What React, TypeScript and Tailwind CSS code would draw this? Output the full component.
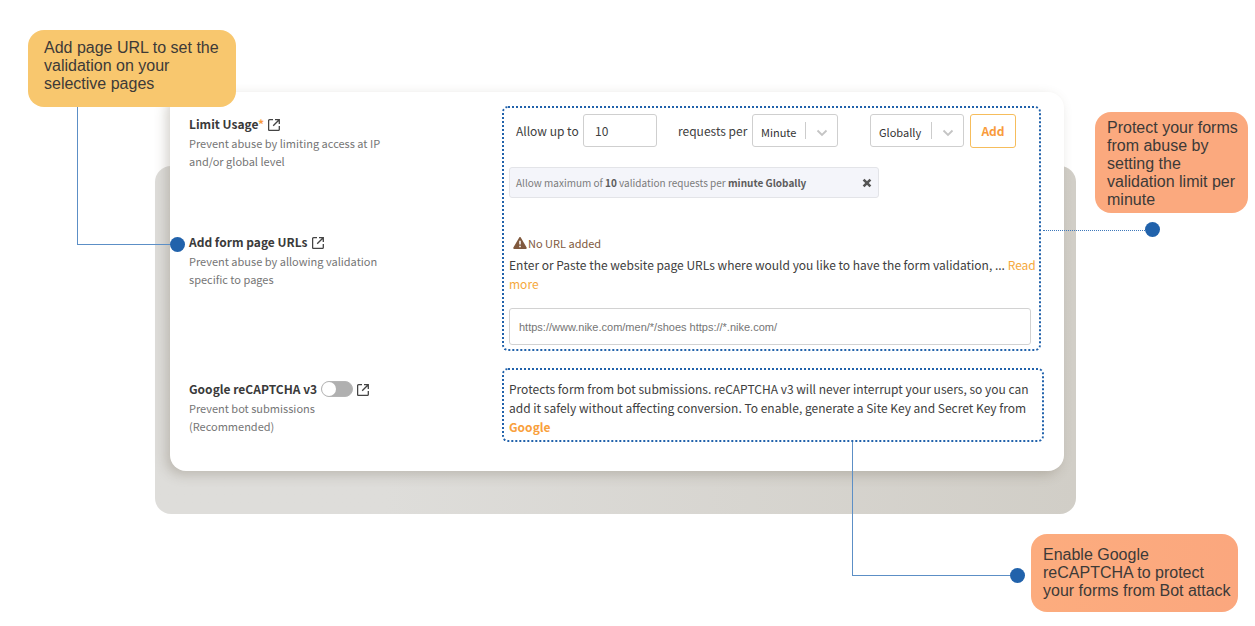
import type { ReactNode } from "react";

function ExternalIcon() {
  return (
    <svg className="mt-0.5 size-3 shrink-0 text-[#444444]" viewBox="0 0 12 12" fill="none" stroke="currentColor" strokeWidth="1.3" aria-hidden="true">
      <path d="M5 .7H1.6A1 1 0 0 0 .6 1.7V10.4A1 1 0 0 0 1.6 11.4H10.3A1 1 0 0 0 11.3 10.4V7" />
      <path d="M7 .7H11.3V5M11.2 .8L5.2 6.8" />
    </svg>
  );
}

function CloseIcon() {
  return (
    <svg className="size-2.5" viewBox="0 0 10 10" fill="none" stroke="currentColor" strokeWidth="2.6" aria-hidden="true">
      <path d="M1.6 1.6L8.4 8.4M8.4 1.6L1.6 8.4" />
    </svg>
  );
}

function WarningIcon() {
  return (
    <svg className="h-3 w-3.5 shrink-0" viewBox="0 0 14 12" aria-hidden="true">
      <path d="M6.2.5a.95.95 0 0 1 1.6 0l5.8 10.1a.9.9 0 0 1-.8 1.4H1.2a.9.9 0 0 1-.8-1.4z" fill="currentColor" />
      <path d="M7 3.8v3.6M7 8.8v1.5" stroke="#fff" strokeWidth="1.5" />
    </svg>
  );
}

interface SettingProps {
  id: string;
  title: string;
  required?: boolean;
  control?: ReactNode;
  children: ReactNode;
}

function Setting({ id, title, required, control, children }: SettingProps) {
  return (
    <div>
      <div className="flex h-5 items-center gap-1">
        <label htmlFor={id} className="text-xs leading-5 font-bold text-[#3a3a3a]">
          {title}
          {required && <span className="text-[#f99b3c]">*</span>}
        </label>
        {control}
        <a href="#docs" aria-label={`${title} help`}>
          <ExternalIcon />
        </a>
      </div>
      <p className="w-[200px] text-[11px] leading-[18px] text-[#757575]">{children}</p>
    </div>
  );
}

interface PickerProps {
  label: string;
  className: string;
  options: string[];
}

function Picker({ label, className, options }: PickerProps) {
  return (
    <div className={`relative h-[33px] ${className}`}>
      <select
        aria-label={label}
        className="size-full appearance-none rounded-[3px] border border-[#cfcfcf] bg-white pb-0.5 pl-2 text-[11px] text-[#333333]"
      >
        {options.map((option) => (
          <option key={option}>{option}</option>
        ))}
      </select>
      <span className="pointer-events-none absolute inset-y-2 right-0 flex w-[33px] items-center justify-center border-l border-[#cccccc] pt-1">
        <svg className="h-2 w-3" viewBox="0 0 12 8" fill="none" stroke="#c4c4c4" strokeWidth="1.8" aria-hidden="true">
          <path d="M1.5 1.5L6 6L10.5 1.5" />
        </svg>
      </span>
    </div>
  );
}

function Callout({ className, children }: { className: string; children: ReactNode }) {
  return (
    <p className={`absolute rounded-2xl font-['Liberation_Sans',Arial,sans-serif] text-base leading-[18px] text-[#3d3a38] ${className}`}>
      {children}
    </p>
  );
}

function Dot({ className }: { className: string }) {
  return <span className={`absolute size-[15px] rounded-full bg-[#2162ab] ${className}`} />;
}

export default function App() {
  return (
    <main className="bg-white pt-[92px] pr-[191px] pb-[155px] pl-[170px] font-['Noto_Sans_CJK_SC','Noto_Sans',sans-serif]">
      <section className="relative">
        {/* Backdrop behind the card */}
        <div className="absolute top-[74px] -right-3 -bottom-[43px] -left-[15px] rounded-2xl bg-linear-to-r from-[#dedddA] from-25% to-[#d1cec7]" />

        <div className="relative grid grid-cols-[313px_1fr] gap-y-[17px] rounded-2xl bg-white pt-3.5 pr-5 pb-[29px] pl-[19px] shadow-[-4px_4px_12px_rgba(90,80,60,0.25)]">
          <div className="flex flex-col gap-[62px] pt-2">
            <Setting id="limit" title="Limit Usage" required>
              Prevent abuse by limiting access at IP and/or global level
            </Setting>
            <Setting id="urls" title="Add form page URLs">
              Prevent abuse by allowing validation specific to pages
            </Setting>
          </div>

          <div className="mr-[3px] rounded-md border-2 border-dotted border-[#2162ab] pt-1.5 pr-2 pb-1 pl-[5px]">
            <div className="flex items-start text-xs leading-[34px] text-[#404040]">
              <label htmlFor="limit" className="w-[74px] pl-[7px] whitespace-nowrap">Allow up to</label>
              <input
                id="limit"
                type="text"
                defaultValue="10"
                className="h-[33px] w-[74px] rounded-[3px] border border-[#cfcfcf] pl-[11px] text-xs"
              />
              <span className="ml-[21px] w-[74px] whitespace-nowrap">requests per</span>
              <Picker label="Period" className="w-[86px]" options={["Minute", "Hour", "Day"]} />
              <Picker label="Scope" className="ml-8 w-[94px]" options={["Globally", "Per IP"]} />
              <button type="button" className="ml-1.5 h-[34px] w-[46px] rounded-[3px] border border-[#f6bd5c] text-xs font-bold text-[#f99b3c]">
                Add
              </button>
            </div>

            <div className="mt-[19px] flex h-[31px] w-[370px] items-center justify-between rounded-[3px] border border-[#e3e4e8] bg-[#f4f5fa] px-1.5 text-[10px] text-[#7b7b7b]">
              <span>
                Allow maximum of <b className="text-[#5c5c5c]">10</b> validation requests per{" "}
                <b className="text-[#5c5c5c]">minute Globally</b>
              </span>
              <button type="button" aria-label="Remove limit" className="text-[#555555]">
                <CloseIcon />
              </button>
            </div>

            <p className="mt-[35px] flex h-5 items-center gap-px pl-1 text-[11px] text-[#80593d]">
              <WarningIcon />
              No URL added
            </p>
            <p className="mt-0.5 -mr-2 text-xs leading-[19px] text-[#404040]">
              Enter or Paste the website page URLs where would you like to have the form validation, ...{" "}
              <a href="#more" className="text-[#f5a83c]">Read more</a>
            </p>
            <input
              id="urls"
              type="text"
              placeholder="https://www.nike.com/men/*/shoes https://*.nike.com/"
              className="mt-[15px] h-[37px] w-full rounded-[3px] border border-[#d2d2d2] px-[9px] font-['Liberation_Sans',Arial,sans-serif] text-[11px] placeholder:text-[#757575]"
            />
          </div>

          <div className="pt-[11px]">
            <Setting
              id="recaptcha"
              title="Google reCAPTCHA v3"
              control={
                <input
                  id="recaptcha"
                  type="checkbox"
                  role="switch"
                  className="h-4 w-8 appearance-none rounded-full border border-[#b5b5b5] bg-[#b0b0b0] before:block before:size-3.5 before:rounded-full before:bg-white checked:bg-[#f99b3c] checked:before:ml-4"
                />
              }
            >
              Prevent bot submissions <span className="inline-block">(Recommended)</span>
            </Setting>
          </div>

          <div className="rounded-md border-2 border-dotted border-[#2162ab] px-[5px] pt-[9px] pb-1">
            <p className="text-xs leading-[19px] text-[#404040]">
              Protects form from bot submissions. reCAPTCHA v3 will never interrupt your users, so you can add it safely
              without affecting conversion. To enable, generate a Site Key and Secret Key from{" "}
              <a href="#google" className="font-bold text-[#f9a03c]">Google</a>
            </p>
          </div>
        </div>

        {/* Callouts with their connector lines */}
        <span className="absolute top-[15px] -left-[93px] h-[138px] w-[93px] border-b border-l border-[#5c8fc6]" />
        <Dot className="top-[145px] left-0" />
        <Callout className="-top-[62px] -left-[142px] h-[77px] w-52 bg-[#f8c76e] px-4 pt-[9px]">
          Add page URL to set the validation on your selective pages
        </Callout>

        <span className="absolute top-[138px] -right-[81px] w-[102px] border-t border-dotted border-[#3f78ba]" />
        <Dot className="top-[130px] -right-24" />
        <Callout className="top-5 -right-[184px] h-[101px] w-[153px] bg-[#fba97e] pt-[7px] pr-2 pl-3">
          Protect your forms from abuse by setting the validation limit per minute
        </Callout>

        <span className="absolute top-[350px] right-[54px] h-[134px] w-[158px] border-b border-l border-[#5c8fc6]" />
        <Dot className="top-[476px] right-[39px]" />
        <Callout className="top-[442px] -right-[174px] h-[78px] w-[207px] bg-linear-to-r from-[#fcac7e] to-[#fba77e] pt-3 pr-1 pl-3">
          Enable Google reCAPTCHA to protect your forms from Bot attack
        </Callout>
      </section>
    </main>
  );
}
